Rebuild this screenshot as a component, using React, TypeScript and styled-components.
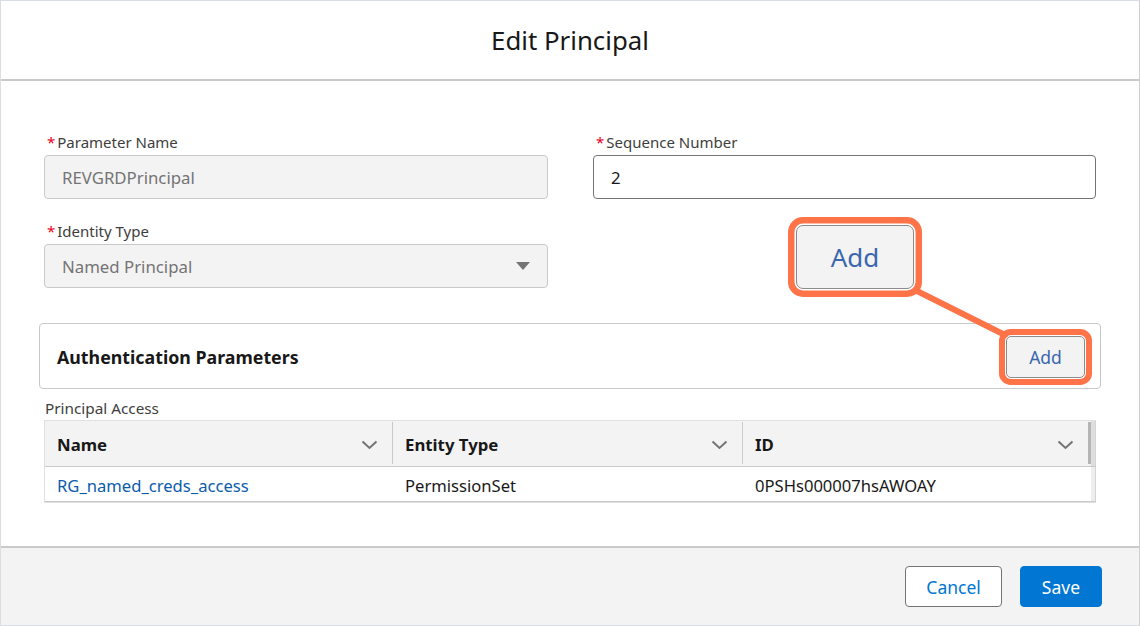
import React from "react";
import styled, { createGlobalStyle } from "styled-components";

const GlobalStyle = createGlobalStyle`
  * {
    box-sizing: border-box;
  }
  body {
    margin: 0;
    background: #ffffff;
    font-family: "Noto Sans", "Open Sans", sans-serif;
  }
`;

const Frame = styled.div`
  position: relative;
  width: 1140px;
  height: 626px;
  display: flex;
  flex-direction: column;
  border: 1px solid #d8dde6;
  border-right-color: #cfcfcf;
  background: #ffffff;
  color: #181818;
`;

const Header = styled.div`
  height: 80px;
  display: flex;
  align-items: center;
  justify-content: center;
  border-bottom: 2px solid #c9c9c9;
  font-size: 25.8px;
  color: #181818;
`;

const Body = styled.div`
  flex: 1;
  padding: 51px 43px 0 43px;
`;

const FieldGrid = styled.div`
  display: grid;
  grid-template-columns: 504px 503px;
  column-gap: 45px;
  row-gap: 22px;
  align-items: start;
`;

const Field = styled.div`
  display: flex;
  flex-direction: column;
`;

const Label = styled.label`
  font-size: 15px;
  line-height: 20px;
  color: #3e3e3c;
  margin-bottom: 3px;
`;

const Required = styled.span`
  color: #ea001e;
  margin-right: 2px;
  margin-left: 3px;
`;

const InputBox = styled.div<{ $disabled?: boolean }>`
  height: 44px;
  display: flex;
  align-items: center;
  justify-content: space-between;
  padding: 0 17px;
  border-radius: 4px;
  border: 1px solid ${(p) => (p.$disabled ? "#c9c9c9" : "#747474")};
  background: ${(p) => (p.$disabled ? "#f3f3f3" : "#ffffff")};
  color: ${(p) => (p.$disabled ? "#747474" : "#181818")};
  font-size: 16.8px;
`;

const CalloutCell = styled.div`
  padding: 4px 0 0 203px;
`;

const CalloutButton = styled.div<{ $big?: boolean }>`
  display: flex;
  align-items: center;
  justify-content: center;
  width: ${(p) => (p.$big ? "118px" : "79px")};
  height: ${(p) => (p.$big ? "64px" : "42px")};
  border: 1.5px solid #8c8c8c;
  border-radius: ${(p) => (p.$big ? "7px" : "5px")};
  background: #f3f3f3;
  color: #3a67ad;
  font-size: ${(p) => (p.$big ? "26px" : "17.5px")};
  box-shadow: 0 0 0 ${(p) => (p.$big ? "1.5px" : "1px")} #ffffff,
    0 0 0 ${(p) => (p.$big ? "8px" : "7px")} #fe7448;
`;

const Card = styled.div`
  margin: 34px -5px 0 -5px;
  height: 66px;
  display: flex;
  align-items: center;
  justify-content: space-between;
  padding: 1px 15px 0 17px;
  border: 1px solid #c9c9c9;
  border-radius: 4px;
`;

const CardTitle = styled.div`
  font-size: 17.8px;
  font-weight: 700;
  color: #181818;
`;

const SectionLabel = styled.div`
  margin-top: 9px;
  margin-bottom: 2px;
  font-size: 15.3px;
  line-height: 20px;
  color: #3e3e3c;
  padding-left: 1px;
`;

const Table = styled.div`
  width: 1052px;
  border: 1px solid #e0e0e0;
  border-right: none;
`;

const Row = styled.div<{ $head?: boolean }>`
  display: grid;
  grid-template-columns: 348px 350px 348px 5px;
  height: ${(p) => (p.$head ? "46px" : "35px")};
  background: ${(p) => (p.$head ? "#f3f3f3" : "#ffffff")};
  border-bottom: 1px solid #c9c9c9;
`;

const HeadCell = styled.div<{ $last?: boolean }>`
  display: flex;
  align-items: center;
  justify-content: space-between;
  padding: 3px 14px 0 12px;
  font-size: 16.8px;
  font-weight: 700;
  color: #181818;
  border-right: ${(p) => (p.$last ? "3px solid #b5b5b5" : "1px solid #c9c9c9")};
  margin: 1px 0 2px 0;
`;

const Cell = styled.div<{ $link?: boolean }>`
  display: flex;
  align-items: center;
  padding: 3px 12px 0 12px;
  font-size: 16.6px;
  color: ${(p) => (p.$link ? "#0b5cab" : "#181818")};
`;

const Gutter = styled.div<{ $head?: boolean }>`
  background: ${(p) => (p.$head ? "#dedede" : "#eeeeee")};
  border-right: 1px solid #d4d4d4;
`;

const Footer = styled.div`
  height: 79px;
  display: flex;
  justify-content: flex-end;
  align-items: flex-start;
  gap: 18px;
  padding: 18px 37px 0 0;
  border-top: 2px solid #c9c9c9;
  background: #f3f3f3;
`;

const FooterButton = styled.div<{ $brand?: boolean }>`
  height: 41px;
  display: flex;
  align-items: center;
  justify-content: center;
  padding: 0 ${(p) => (p.$brand ? "21px" : "20px")};
  border-radius: 4px;
  font-size: 17.5px;
  border: 1px solid ${(p) => (p.$brand ? "#0176d3" : "#747474")};
  background: ${(p) => (p.$brand ? "#0176d3" : "#ffffff")};
  color: ${(p) => (p.$brand ? "#ffffff" : "#0176d3")};
`;

const Connector = styled.svg`
  position: absolute;
  left: 0;
  top: 0;
  pointer-events: none;
`;

const Chevron = () => (
  <svg width="17" height="10" viewBox="0 0 17 10">
    <polyline points="1.5,1.5 8.5,8 15.5,1.5" fill="none" stroke="#747474" strokeWidth="2" />
  </svg>
);

const Caret = () => (
  <svg width="14" height="8" viewBox="0 0 14 8">
    <polygon points="0,0 14,0 7,8" fill="#747474" />
  </svg>
);

const columns = ["Name", "Entity Type", "ID"];

function App() {
  return (
    <>
      <GlobalStyle />
      <Frame>
        <Header>Edit Principal</Header>
        <Body>
          <FieldGrid>
            <Field>
              <Label>
                <Required>*</Required>Parameter Name
              </Label>
              <InputBox $disabled>REVGRDPrincipal</InputBox>
            </Field>
            <Field>
              <Label>
                <Required>*</Required>Sequence Number
              </Label>
              <InputBox>2</InputBox>
            </Field>
            <Field>
              <Label>
                <Required>*</Required>Identity Type
              </Label>
              <InputBox $disabled>
                Named Principal
                <Caret />
              </InputBox>
            </Field>
            <CalloutCell>
              <CalloutButton $big>Add</CalloutButton>
            </CalloutCell>
          </FieldGrid>

          <Card>
            <CardTitle>Authentication Parameters</CardTitle>
            <CalloutButton>Add</CalloutButton>
          </Card>

          <SectionLabel>Principal Access</SectionLabel>
          <Table>
            <Row $head>
              {columns.map((c, i) => (
                <HeadCell key={c} $last={i === columns.length - 1}>
                  {c}
                  <Chevron />
                </HeadCell>
              ))}
              <Gutter $head />
            </Row>
            <Row>
              <Cell $link>RG_named_creds_access</Cell>
              <Cell>PermissionSet</Cell>
              <Cell>0PSHs000007hsAWOAY</Cell>
              <Gutter />
            </Row>
          </Table>
        </Body>
        <Footer>
          <FooterButton>Cancel</FooterButton>
          <FooterButton $brand>Save</FooterButton>
        </Footer>
        <Connector width="1140" height="626">
          <line x1="916" y1="290" x2="1004" y2="334" stroke="#fe7448" strokeWidth="6" strokeLinecap="round" />
        </Connector>
      </Frame>
    </>
  );
}

export default App;
